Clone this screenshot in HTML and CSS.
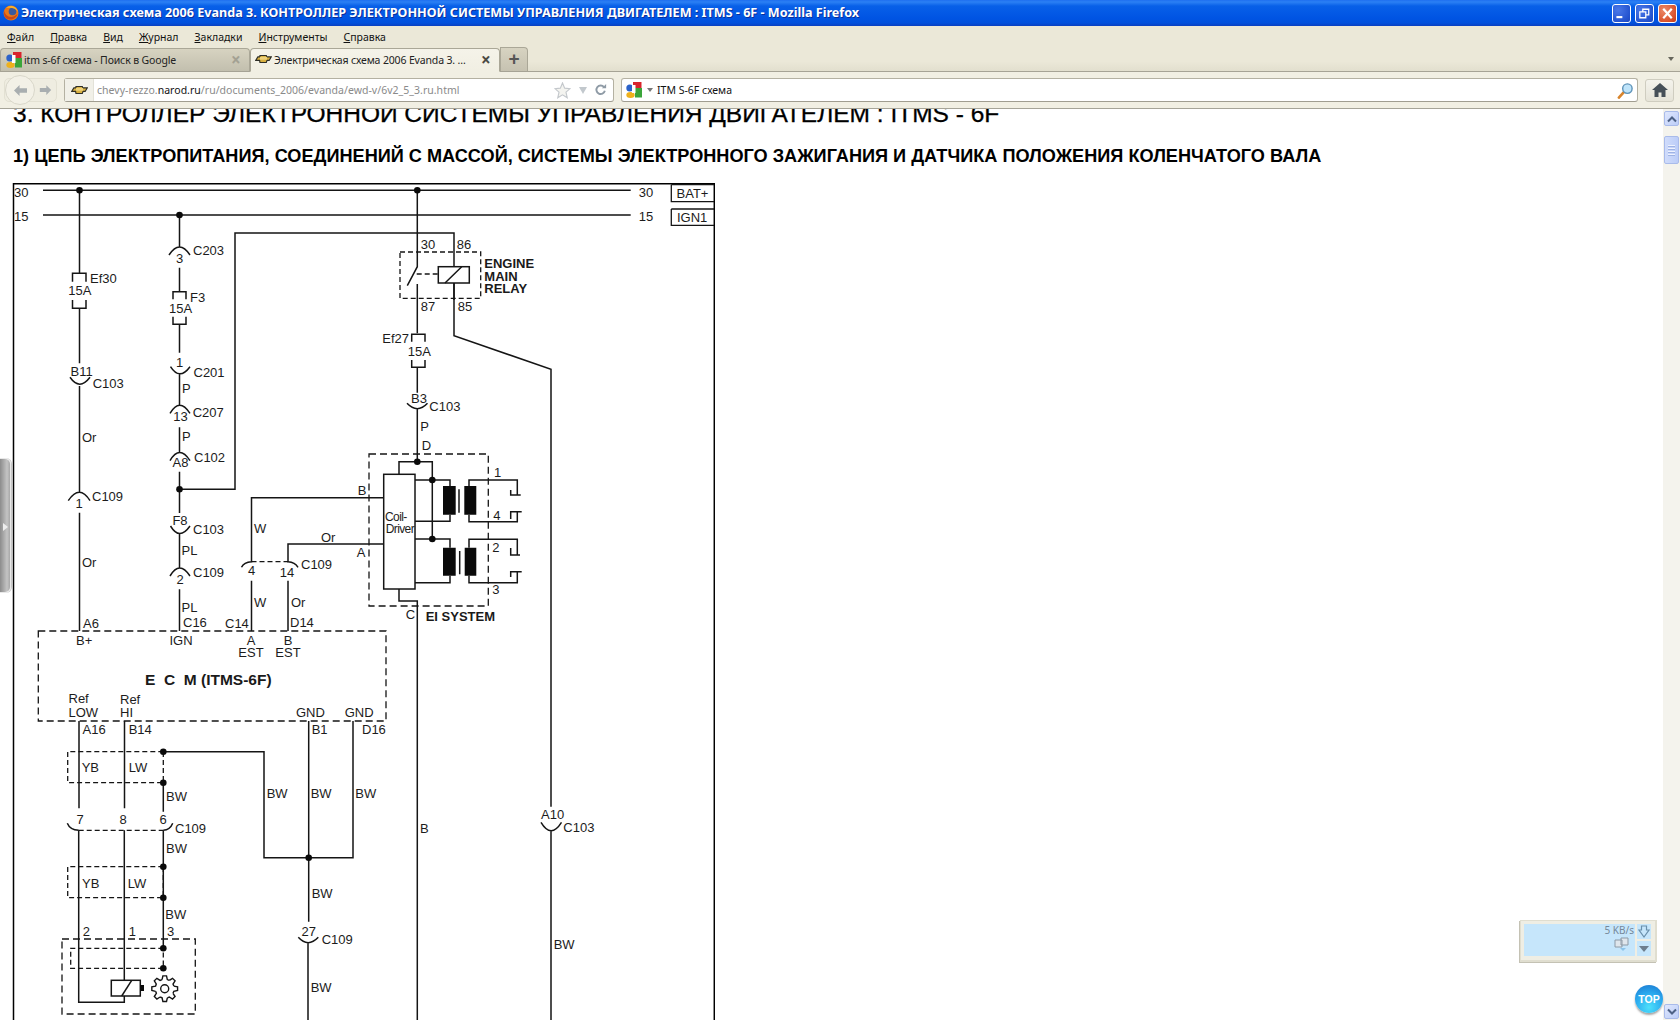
FILE: index.html
```html
<!DOCTYPE html>
<html lang="ru">
<head>
<meta charset="utf-8">
<title>Электрическая схема 2006 Evanda 3</title>
<link rel="stylesheet" href="styles.css">
</head>
<body>
<svg class="defs" width="0" height="0" aria-hidden="true">
  <defs>
    <symbol id="bowtie" viewBox="0 0 24 12">
      <path d="M7 1H16L16.500 3H23L20 8H17L16 11H7L6.500 8H1L4 3H7Z" fill="#d8b040" stroke="#2e2e26" stroke-width="1.600"/>
      <path d="M7 3H17V7H7Z" fill="#efd27a"/>
    </symbol>
    <symbol id="google" viewBox="0 0 16 16">
      <path d="M7 0H15.500V7H7Z" fill="#d8242c"/>
      <path d="M9 6H16V15.500H9Z" fill="#3aa53a"/>
      <circle cx="3.800" cy="6" r="3.500" fill="#2b62c9"/>
      <ellipse cx="4.500" cy="13" rx="4.200" ry="3" fill="#eeb11c"/>
      <path d="M6 3H9.500V11H6Z" fill="#fff"/>
    </symbol>
  </defs>
</svg>

<div class="window">
  <header class="titlebar">
    <svg class="fx" viewBox="0 0 16 16"><circle cx="8" cy="8" r="7.500" fill="#e8771a"/><circle cx="9.500" cy="6.500" r="3.800" fill="#3a5a9e"/><path d="M1 5C2 11 8 15 14.500 9C13 16 1 17 1 8Z" fill="#c9481a"/><path d="M3 3C7 -1 14 1 15 7C13 3 8 2 3 3Z" fill="#f8b32c"/></svg>
    <span class="title-text">Электрическая схема 2006 Evanda 3. КОНТРОЛЛЕР ЭЛЕКТРОННОЙ СИСТЕМЫ УПРАВЛЕНИЯ ДВИГАТЕЛЕМ : ITMS - 6F - Mozilla Firefox</span>
    <div class="win-btns">
      <span class="win-btn"><svg viewBox="0 0 20 19"><path d="M4 12.500H11V15H4Z" fill="#fff"/></svg></span>
      <span class="win-btn"><svg viewBox="0 0 20 19"><path d="M4.500 7.500H11.500V14.500H4.500ZM8 7V4.500H15V11H12" fill="none" stroke="#fff" stroke-width="1.500"/></svg></span>
      <span class="win-btn close"><svg viewBox="0 0 20 19"><path d="M5 4L15 15M15 4L5 15" stroke="#fff" stroke-width="2.600"/></svg></span>
    </div>
  </header>

  <nav class="menubar">
    <span class="menu"><u>Ф</u>айл</span><span class="menu"><u>П</u>равка</span><span class="menu"><u>В</u>ид</span><span class="menu"><u>Ж</u>урнал</span><span class="menu"><u>З</u>акладки</span><span class="menu"><u>И</u>нструменты</span><span class="menu"><u>С</u>правка</span>
  </nav>

  <div class="tabbar">
    <div class="tab">
      <svg class="tab-ico google"><use href="#google"/></svg>
      <span class="tab-label">itm s-6f схема - Поиск в Google</span>
      <span class="tab-x dim">×</span>
    </div>
    <div class="tab active">
      <svg class="tab-ico bow"><use href="#bowtie"/></svg>
      <span class="tab-label">Электрическая схема 2006 Evanda 3. ...</span>
      <span class="tab-x">×</span>
    </div>
    <div class="newtab">+</div>
    <span class="tabs-drop"></span>
  </div>

  <div class="navbar">
    <div class="backfwd">
      <span class="back"><svg viewBox="0 0 16 14"><path d="M1 7L7 1V4.500H15V9.500H7V13Z" fill="#a9aeb0"/></svg></span>
      <span class="fwd"><svg viewBox="0 0 16 14"><path d="M15 7L9 1V4.500H1V9.500H9V13Z" fill="#a9aeb0"/></svg></span>
    </div>
    <div class="urlbar">
      <span class="identity"><svg class="bow"><use href="#bowtie"/></svg></span>
      <span class="url">chevy-rezzo.<b>narod.ru</b>/ru/documents_2006/evanda/ewd-v/6v2_5_3.ru.html</span>
      <svg class="star" viewBox="0 0 18 18"><path d="M9 1L11.300 6.500L17 7L12.700 10.800L14 16.700L9 13.600L4 16.700L5.300 10.800L1 7L6.700 6.500Z" fill="#f4f4f0" stroke="#c4c8cc" stroke-width="1.200"/></svg>
      <span class="drop-tri"></span>
      <svg class="reload" viewBox="0 0 14 14"><path d="M11.500 8A5 5 0 1 1 10.500 3.500" fill="none" stroke="#8f9ba6" stroke-width="2.200"/><path d="M8 5H13V0Z" fill="#8f9ba6"/></svg>
    </div>
    <div class="searchbar">
      <svg class="search-g"><use href="#google"/></svg>
      <span class="drop-small"></span>
      <span class="query">ITM S-6F схема</span>
      <svg class="lens" viewBox="0 0 18 18"><path d="M2 16.500L7.500 10.500" stroke="#d8842c" stroke-width="2.800" stroke-linecap="round"/><circle cx="11" cy="7" r="5" fill="#bfe4fa" stroke="#5e93b8" stroke-width="1.500"/></svg>
    </div>
    <div class="home"><svg viewBox="0 0 16 14"><path d="M8 0L16 7H13.500V14H9.500V9.500H6.500V14H2.500V7H0Z" fill="#465058"/></svg></div>
  </div>

  <div class="viewport">
    <main class="page">
      <h1 class="h-main">3. КОНТРОЛЛЕР ЭЛЕКТРОННОЙ СИСТЕМЫ УПРАВЛЕНИЯ ДВИГАТЕЛЕМ : ITMS - 6F</h1>
      <h2 class="h-sub">1) ЦЕПЬ ЭЛЕКТРОПИТАНИЯ, СОЕДИНЕНИЙ С МАССОЙ, СИСТЕМЫ ЭЛЕКТРОННОГО ЗАЖИГАНИЯ И ДАТЧИКА ПОЛОЖЕНИЯ КОЛЕНЧАТОГО ВАЛА</h2>
      <svg class="diagram" viewBox="12 183 703 837">
        <!-- frame and rails -->
        <path class="w frame" d="M13.500 1020V183.700H714.300V1020"/>
        <path class="w" d="M43 190.300H630.700M43 215H630.700"/>
        <path class="w thin" d="M671.300 184.700V201.700H714M671.300 184.700H714M671.300 209H714M671.300 209V225.300H714"/>
        <text class="t" x="14" y="196.700">30</text><text class="t" x="14" y="220.700">15</text>
        <text class="t" x="638.700" y="196.700">30</text><text class="t" x="638.700" y="220.700">15</text>
        <text class="t" x="676.500" y="198">BAT+</text><text class="t" x="677" y="222.300">IGN1</text>

        <!-- column 1 -->
        <path class="w" d="M79.500 190.300V273.300M72.500 281.700V273.300H86V281.700M72.500 300V308.300H86V300M79.500 308.300V363.300"/>
        <path class="w" d="M70 377.300Q79.500 391 90 377.300M79.500 386V492.700M68.300 500.700Q79.500 484 90 500.700M79.500 512.700V631"/>
        <text class="t" x="90" y="283.300">Ef30</text><text class="t" x="68.300" y="295">15A</text>
        <text class="t" x="70.500" y="376">B11</text><text class="t" x="92.700" y="388">C103</text>
        <text class="t" x="82" y="442">Or</text><text class="t c" x="79" y="508.300">1</text><text class="t" x="92" y="501">C109</text>
        <text class="t" x="82" y="566.700">Or</text><text class="t" x="83" y="627.700">A6</text><text class="t" x="76" y="645">B+</text>

        <!-- column 2 -->
        <path class="w" d="M179.500 215V247.300M169 255Q179.500 239 190 255M179.500 267.700V291.700M173 299.300V291.700H186V299.300M173 316.700V324.300H186V316.700M179.500 324.300V352.700"/>
        <path class="w" d="M170.500 366.700Q179.500 381 190 366.700M179.500 374V405M170 413.300Q179.500 397 190 413.300M179.500 427.300V452.700M170 460.700Q179.500 444.500 190 460.700M179.500 471.700V513"/>
        <path class="w" d="M170.500 526Q179.500 541 190 526M179.500 533.300V568.300M170 576Q179.500 560 190 576M179.500 589.300V631"/>
        <path class="w" d="M179.500 489.300H235V233H454V335.700L551 369.300V806.700M541 822.300Q551 839 561.500 822.300M551 830.700V1020"/>
        <text class="t c" x="179.500" y="263.300">3</text><text class="t" x="193" y="255">C203</text>
        <text class="t" x="190" y="302.300">F3</text><text class="t" x="169" y="313.300">15A</text>
        <text class="t c" x="179.500" y="366.700">1</text><text class="t" x="193.500" y="376.700">C201</text>
        <text class="t" x="182" y="393.300">P</text><text class="t c" x="180.500" y="420.700">13</text><text class="t" x="192.700" y="416.700">C207</text>
        <text class="t" x="182" y="440.700">P</text><text class="t c" x="180.500" y="467.300">A8</text><text class="t" x="194" y="461.700">C102</text>
        <text class="t c" x="180" y="525.300">F8</text><text class="t" x="193" y="534">C103</text>
        <text class="t" x="181.500" y="555.300">PL</text><text class="t c" x="180" y="584">2</text><text class="t" x="193" y="576.700">C109</text>
        <text class="t" x="181.500" y="611.700">PL</text><text class="t" x="183" y="627.300">C16</text><text class="t" x="169.500" y="645">IGN</text>
        <text class="t" x="541" y="818.700">A10</text><text class="t" x="563.300" y="832.300">C103</text><text class="t" x="553.700" y="949.300">BW</text>

        <!-- EST wires -->
        <path class="w" d="M383.700 497.700H251.500V561.700Q244 562 241.500 567.300M251.500 580.700V631M383.700 544H288V561.700Q295 562 298 567.300M288 580.700V631"/>
        <path class="w thin dash-s" d="M251.500 561.700H288"/>
        <text class="t" x="254" y="533.300">W</text><text class="t c" x="251.500" y="575">4</text><text class="t" x="254" y="607.300">W</text><text class="t" x="225" y="627.700">C14</text>
        <text class="t c" x="251" y="645">A</text><text class="t c" x="251" y="657.300">EST</text>
        <text class="t" x="321" y="541.700">Or</text><text class="t c" x="287" y="577.300">14</text><text class="t" x="301" y="569.300">C109</text>
        <text class="t" x="291" y="607.300">Or</text><text class="t" x="290" y="627.300">D14</text>
        <text class="t c" x="288" y="645">B</text><text class="t c" x="288" y="657.300">EST</text>
        <text class="t" x="357.700" y="495">B</text><text class="t" x="356.700" y="557.300">A</text>

        <!-- ECM -->
        <rect class="w thin dash" x="38.300" y="631" width="347.700" height="90"/>
        <text class="b ecm" x="145" y="685" xml:space="preserve">E  C  M (ITMS-6F)</text>
        <text class="t" x="68.500" y="703.300">Ref</text><text class="t" x="68.500" y="716.700">LOW</text>
        <text class="t" x="120" y="704">Ref</text><text class="t" x="120" y="716.700">HI</text>
        <text class="t" x="296" y="716.700">GND</text><text class="t" x="344.700" y="716.700">GND</text>
        <text class="t" x="82.500" y="734">A16</text><text class="t" x="128.700" y="734">B14</text>
        <text class="t" x="311.700" y="733.700">B1</text><text class="t" x="362" y="733.700">D16</text>

        <!-- under ECM -->
        <path class="w" d="M79 721V808.300M124.500 721V808.300M163.300 751.700H264V857.700H353V721M308.700 721V921.700M163.300 782.700V811.700M67.300 823.300Q70 830 78.700 830.300M163.300 830.300Q170 830 172.700 823.300"/>
        <path class="w" d="M78.700 830.300V1002.300H124.300V996M124.300 830.300V980.300M163.300 830.300V948.300"/>
        <path class="w thin dash-s" d="M78.700 830.300H163.300M163.300 751.700H67.700V782.700H163.300V751.700M163.300 866.700H67.700V897.700H163.300V866.700M163.300 948.300H70.700V968.300H163.300V948.300"/>
        <path class="w" d="M298.300 937.300Q308 948 318.300 937.300M308 942.300V1020"/>
        <text class="t" x="81.700" y="772.300">YB</text><text class="t" x="128.700" y="772.300">LW</text><text class="t" x="166" y="801">BW</text>
        <text class="t c" x="80" y="824.300">7</text><text class="t c" x="123" y="824.300">8</text><text class="t c" x="163" y="824.300">6</text><text class="t" x="175" y="832.700">C109</text>
        <text class="t" x="266.700" y="797.700">BW</text><text class="t" x="310.700" y="797.700">BW</text><text class="t" x="355.300" y="797.700">BW</text>
        <text class="t" x="166" y="853.300">BW</text><text class="t" x="82" y="888.300">YB</text><text class="t" x="127.700" y="888.300">LW</text><text class="t" x="165.300" y="919">BW</text>
        <text class="t" x="311.700" y="897.700">BW</text><text class="t c" x="308.700" y="936">27</text><text class="t" x="321.700" y="944">C109</text><text class="t" x="310.700" y="991.700">BW</text>
        <text class="t" x="82.700" y="936">2</text><text class="t" x="128.700" y="936">1</text><text class="t" x="167" y="936">3</text>

        <!-- sensor block -->
        <rect class="w thin dash" x="62" y="939" width="133.300" height="75"/>
        <rect class="w white" x="111.300" y="980.300" width="29" height="15.700"/>
        <path class="w" d="M121.700 996L131.700 980.300"/>
        <rect class="fill" x="140.300" y="985" width="3.700" height="6"/>
        <g class="gear" transform="translate(164.700 988.700)">
          <path id="tooth" d="M9.130-2.620L12.870-1.810V1.810L9.130 2.620L8.310 4.600"/>
          <use href="#tooth" transform="rotate(45)"/><use href="#tooth" transform="rotate(90)"/><use href="#tooth" transform="rotate(135)"/><use href="#tooth" transform="rotate(180)"/><use href="#tooth" transform="rotate(225)"/><use href="#tooth" transform="rotate(270)"/><use href="#tooth" transform="rotate(315)"/>
          <circle r="4"/>
        </g>

        <!-- relay -->
        <path class="w" d="M417.300 190.300V266.700L407.300 285.700M417.300 284V333.300"/>
        <rect class="w thin dash-s" x="400" y="252" width="80.700" height="46.300"/>
        <path class="w thin dash-s" d="M416.700 274H438.300"/>
        <rect class="w white" x="438.300" y="266.700" width="31" height="16.300"/>
        <path class="w" d="M445 283L461.700 266.700M454 283V300"/>
        <path class="w" d="M411.700 341.700V334.300H425V341.700M411.700 360V367.300H425V360M417.300 367.300V392.700M407 403.300Q417.300 414 427.500 403.300M417.300 408.700V461.700"/>
        <text class="t" x="420.700" y="249.300">30</text><text class="t" x="456.700" y="249.300">86</text><text class="t" x="420.700" y="310.700">87</text><text class="t" x="457.700" y="310.700">85</text>
        <text class="b" x="484.300" y="268.300">ENGINE</text><text class="b" x="484.300" y="280.700">MAIN</text><text class="b" x="484.300" y="292.700">RELAY</text>
        <text class="t" x="382.300" y="342.700">Ef27</text><text class="t" x="407.700" y="356">15A</text><text class="t" x="411" y="402.700">B3</text><text class="t" x="429.300" y="410.700">C103</text>
        <text class="t" x="420.300" y="430.700">P</text><text class="t" x="421.700" y="450">D</text>

        <!-- EI system -->
        <rect class="w thin dash" x="369" y="454" width="119.300" height="152"/>
        <rect class="w white" x="383.700" y="474.300" width="31.300" height="114.700"/>
        <path class="w" d="M399 474.300V461.700H432.300V539M415 480H450V486M450 514.700V521.300H415M415 539H450V547.700M450 575.700V582.700H415"/>
        <path class="w" d="M469 486V480H517.300V495M510.700 490V495H520.700M469 514.700V521.700H517.300V511.700H521.700M510.700 519V511.700H517.300"/>
        <path class="w" d="M469 547.700V539.300H517.300V555M510.700 548V555H520M469 575.700V582.700H517.300V571.700H521.700M510.700 577V571.700H517.300"/>
        <path class="fill" d="M443 486H455.700V514.700H443ZM464.300 486H476.300V514.700H464.300ZM443 547.700H455.700V575.700H443ZM464.700 547.700H476.300V575.700H464.700Z"/>
        <path class="w" d="M459 489.300V512.700M459.700 551V574.300M399 589V601H417.300V1020"/>
        <text class="t small" x="385" y="520.700">Coil-</text><text class="t small" x="385.700" y="532.700">Driver</text>
        <text class="t" x="494" y="476.700">1</text><text class="t" x="493.300" y="520">4</text><text class="t" x="492.300" y="551.700">2</text><text class="t" x="492.300" y="594">3</text>
        <text class="t" x="405.700" y="619">C</text><text class="b" x="425.700" y="620.700">EI SYSTEM</text>
        <text class="t" x="420" y="833.300">B</text>

        <!-- nodes -->
        <g class="fill">
          <circle cx="79.500" cy="190.300" r="3.300"/><circle cx="179.500" cy="215" r="3.300"/><circle cx="417.300" cy="190.300" r="3.300"/>
          <circle cx="179.500" cy="489.300" r="3.300"/><circle cx="417.300" cy="461.700" r="3.300"/><circle cx="432.300" cy="480" r="3.300"/><circle cx="432.300" cy="539" r="3.300"/>
          <circle cx="163.300" cy="751.700" r="3.300"/><circle cx="163.300" cy="782.700" r="3.300"/><circle cx="163.300" cy="866.700" r="3.300"/><circle cx="163.300" cy="897.700" r="3.300"/>
          <circle cx="163.300" cy="948.300" r="3.300"/><circle cx="163.300" cy="968.300" r="3.300"/><circle cx="308.700" cy="857.700" r="3.300"/>
        </g>
      </svg>
    </main>

    <aside class="scrollbar">
      <span class="sb-btn"><svg viewBox="0 0 10 8"><path d="M1 6.500L5 2.500L9 6.500" fill="none" stroke="#4d6185" stroke-width="2"/></svg></span>
      <span class="sb-thumb"><i></i><i></i><i></i><i></i></span>
      <span class="sb-spacer"></span>
      <span class="sb-btn"><svg viewBox="0 0 10 8"><path d="M1 1.500L5 5.500L9 1.500" fill="none" stroke="#4d6185" stroke-width="2"/></svg></span>
    </aside>

    <div class="handle"><span class="handle-tri"></span></div>

    <div class="widget">
      <div class="widget-main">
        <span class="speed">5 KB/s</span>
        <svg class="speaker" viewBox="0 0 16 14"><path d="M1 3H8V10H1ZM7 1H14V8H7Z" fill="#dfe6ec" stroke="#8d9aa6"/><path d="M6 11H12L9 14Z" fill="#8cc4ea"/></svg>
      </div>
      <div class="widget-side">
        <span class="side-btn"><svg viewBox="0 0 12 14"><path d="M3.500 1H8.500V5H11L6 12L1 5H3.500Z" fill="#c6e6fb" stroke="#6a90ac" stroke-width="1.200"/></svg></span>
        <span class="side-btn"><span class="side-tri"></span></span>
      </div>
    </div>

    <div class="top-ball">TOP</div>
  </div>
</div>
</body>
</html>
```
FILE: styles.css
```css
* { box-sizing: border-box; }
html, body { margin: 0; height: 100%; overflow: hidden; background: #fff; }
.defs { position: absolute; }
.window { display: flex; flex-direction: column; height: 1020px; font-family: "Noto Sans", sans-serif; }

.titlebar { height: 26px; flex: none; display: flex; align-items: center; padding: 0 3px 0 3px; background: linear-gradient(#1f6ff0 0, #2b80f4 2px, #0860e8 6px, #0054e3 18px, #0150dc 23px, #0a3fc0 26px); }
.fx { width: 16px; height: 16px; flex: none; }
.title-text { margin-left: 2px; flex: 1; color: #fff; font: bold 12.6px/26px "Noto Sans", sans-serif; white-space: nowrap; overflow: hidden; text-shadow: 1px 1px 0 #0a2f9a; }
.win-btns { display: flex; gap: 4px; }
.win-btn { width: 19px; height: 19px; border: 1px solid #fff; border-radius: 3px; background: radial-gradient(circle at 30% 30%, #4a78e8, #2554d0 70%, #1e46bd); display: block; }
.win-btn svg { width: 100%; height: 100%; display: block; }
.win-btn.close { background: radial-gradient(circle at 30% 30%, #ec8a68, #d9512c 70%, #c03a18); }

.menubar { height: 21px; flex: none; display: flex; align-items: center; gap: 16px; padding: 0 0 0 7px; background: #ebe8d8; font-size: 10.5px; color: #111; }
.menubar u { text-decoration-thickness: 1px; }

.tabbar { height: 25px; flex: none; display: flex; align-items: flex-end; background: linear-gradient(#ebe8d8 60%, #e2dfce); border-bottom: 1px solid #a6a395; position: relative; }
.tab { width: 250px; height: 24px; display: flex; align-items: center; padding: 0 5px 0 5px; margin-bottom: -1px; background: linear-gradient(#d7d3c1, #c2bfae); border: 1px solid #aaa797; border-bottom-color: #a6a395; border-radius: 4px 4px 0 0; font-size: 10.5px; color: #222; }
.tab.active { padding-left: 4px; background: linear-gradient(#f5f3e9, #f1efe3); border-bottom-color: #f1efe3; }
.tab-ico { flex: none; }
.tab-ico.google { width: 16px; height: 16px; margin-right: 2px; }
.tab-ico.bow { width: 17px; height: 10px; margin: -3px 2px 0 0; }
.tab-label { flex: 1; white-space: nowrap; overflow: hidden; letter-spacing: -0.15px; }
.tab-x { font-size: 17px; line-height: 16px; color: #4a4a44; font-weight: bold; width: 12px; margin-right: 1px; }
.tab-x.dim { color: #a3a193; }
.newtab { width: 28px; height: 24px; margin-bottom: 0; background: linear-gradient(#d7d3c1, #c6c2b1); border: 1px solid #aaa797; border-bottom: 0; border-radius: 0 4px 0 0; font: bold 19px/21px "Liberation Sans", sans-serif; text-align: center; color: #555; }
.tabs-drop { position: absolute; right: 6px; top: 10px; border: 3px solid transparent; border-top: 4px solid #66665c; }

.navbar { height: 37px; flex: none; display: flex; align-items: center; padding: 0 6px 0 4px; background: #f1efe3; border-bottom: 1px solid #a6a498; }
.backfwd { width: 53px; height: 24px; flex: none; margin-right: 7px; display: flex; align-items: center; position: relative; background: #efede1; border: 1px solid #e3e1d3; border-radius: 5px; }
.back { position: absolute; left: 0; top: -4px; width: 30px; height: 30px; border-radius: 50%; background: #f3f1e7; border: 1px solid #d9d7ca; display: flex; align-items: center; justify-content: center; }
.back svg { width: 15px; height: 13px; }
.fwd { position: absolute; left: 34px; top: 5px; width: 13px; height: 12px; }
.fwd svg { width: 13px; height: 12px; display: block; }
.urlbar { width: 550px; height: 24px; flex: none; display: flex; align-items: center; background: #fff; border: 1px solid #b4b1a2; border-bottom-color: #a09d90; border-radius: 3px; }
.identity { width: 29px; height: 22px; flex: none; display: flex; align-items: center; justify-content: center; background: #f1f0e8; border-right: 1px solid #e3e2d8; }
.bow { width: 17px; height: 10px; }
.url { flex: 1; padding-left: 3px; white-space: nowrap; font-size: 10.5px; letter-spacing: 0.03px; color: #8a8a8a; }
.url b { font-weight: 400; color: #111; }
.star { width: 17px; height: 17px; margin-right: 8px; margin-left: -1px; }
.drop-tri { border: 4.5px solid transparent; border-top: 7px solid #c2c8cd; border-bottom: 0; margin-right: 8px; }
.reload { width: 12px; height: 12px; margin-right: 6px; }
.searchbar { flex: 1; height: 24px; margin-left: 7px; display: flex; align-items: center; padding-left: 4px; background: #fff; border: 1px solid #b4b1a2; border-bottom-color: #a09d90; border-radius: 3px; }
.search-g { width: 16px; height: 16px; flex: none; }
.drop-small { margin: 0 4px 0 5px; border: 3px solid transparent; border-top: 4px solid #777; border-bottom: 0; }
.query { flex: 1; font-size: 10.5px; color: #111; }
.lens { width: 17px; height: 17px; margin-right: 3px; }
.home { width: 29px; height: 23px; flex: none; margin-left: 7px; display: flex; align-items: center; justify-content: center; background: linear-gradient(#f4f3ec, #e6e4d8); border: 1px solid #cfcdc0; border-radius: 3px; }
.home svg { width: 16px; height: 14px; }

.viewport { flex: 1; display: flex; position: relative; overflow: hidden; background: #fff; }
.page { flex: 1; overflow: hidden; padding-left: 12px; color: #000; font-family: "Liberation Sans", Arial, sans-serif; }
.h-main { margin: -9px 0 0 1px; font-size: 24.500px; font-weight: 400; line-height: 28px; white-space: nowrap; -webkit-text-stroke: 0.3px #000; }
.h-sub { margin: 17px 0 0 1px; font-size: 18.150px; font-weight: 700; line-height: 22px; white-space: nowrap; }
.diagram { display: block; margin-top: 16px; width: 703px; height: 837px; }
.w { fill: none; stroke: #151515; stroke-width: 1.500; }
.w.thin { stroke-width: 1.300; }
.w.frame { stroke: #000; }
.w.white { fill: #fff; }
.dash { stroke-dasharray: 7 4; }
.dash-s { stroke-dasharray: 5 3; }
.fill { fill: #0a0a0a; }
.gear { fill: none; stroke: #151515; stroke-width: 1.400; }
.t { font: 13px "Liberation Sans", Arial, sans-serif; fill: #1c1c1c; }
.t.c { text-anchor: middle; }
.t.small { font-size: 12px; letter-spacing: -0.6px; }
.b { font: bold 13px "Liberation Sans", Arial, sans-serif; fill: #1a1a1a; }
.b.ecm { font-size: 15.500px; white-space: pre; }

.scrollbar { width: 17px; flex: none; display: flex; flex-direction: column; gap: 10px; padding: 2px 1px 1px 1px; background: #f4f3ed; }
.sb-btn { height: 15px; flex: none; display: flex; align-items: center; justify-content: center; background: linear-gradient(135deg, #dfe7fd, #bccdf8); border: 1px solid #a9bbea; border-radius: 2px; }
.sb-btn svg { width: 10px; height: 8px; }
.sb-thumb { height: 28px; flex: none; display: flex; flex-direction: column; align-items: center; justify-content: center; gap: 1px; background: linear-gradient(90deg, #d0dcfb, #bccdf8); border: 1px solid #a9bbea; border-radius: 2px; }
.sb-thumb i { width: 7px; height: 1px; background: #eef2fe; border-bottom: 1px solid #9fb3e4; height: 2px; }
.sb-spacer { flex: 1; margin: -10px 0; }

.handle { position: absolute; left: 0; top: 349px; width: 11px; height: 135px; background: linear-gradient(90deg, #8c8c8c, #c4c4c4 70%, #a8a8a8); border: 1px solid #e8e8e8; border-left: 0; border-radius: 0 6px 6px 0; box-shadow: 1px 0 0 #c8c8c8; }
.handle-tri { position: absolute; left: 3px; top: 64px; border: 4px solid transparent; border-left: 5px solid #eee; border-right: 0; }

.widget { position: absolute; left: 1520px; top: 811px; width: 137px; height: 42px; display: flex; gap: 2px; padding: 3px 4px 4px 3px; background: #efeee4; border: 1px solid #e0ded0; border-width: 1px 2px 2px 1px; box-shadow: -1px 1px 0 #c4c2b4; }
.widget-main { flex: 1; position: relative; background: #c6e6fb; }
.speed { position: absolute; right: 1px; top: 0; font: 10px/13px "Noto Sans", sans-serif; color: #75889a; }
.speaker { position: absolute; right: 5px; top: 13px; width: 16px; height: 14px; }
.widget-side { width: 14px; display: flex; flex-direction: column; gap: 2px; }
.side-btn { flex: 1; display: flex; align-items: center; justify-content: center; background: #c6e6fb; }
.side-btn svg { width: 12px; height: 14px; }
.side-tri { border: 5px solid transparent; border-top: 6px solid #6e7f8e; border-bottom: 0; }

.top-ball { position: absolute; left: 1635px; top: 876px; width: 28px; height: 28px; border-radius: 50%; background: radial-gradient(circle at 50% 80%, #4de0fb, #2aa8ee 55%, #1a72cc); box-shadow: 0 2px 2px rgba(60,60,60,.45); color: #fff; font: bold 10.500px/28px "Liberation Sans", sans-serif; text-align: center; letter-spacing: 0; }
```
